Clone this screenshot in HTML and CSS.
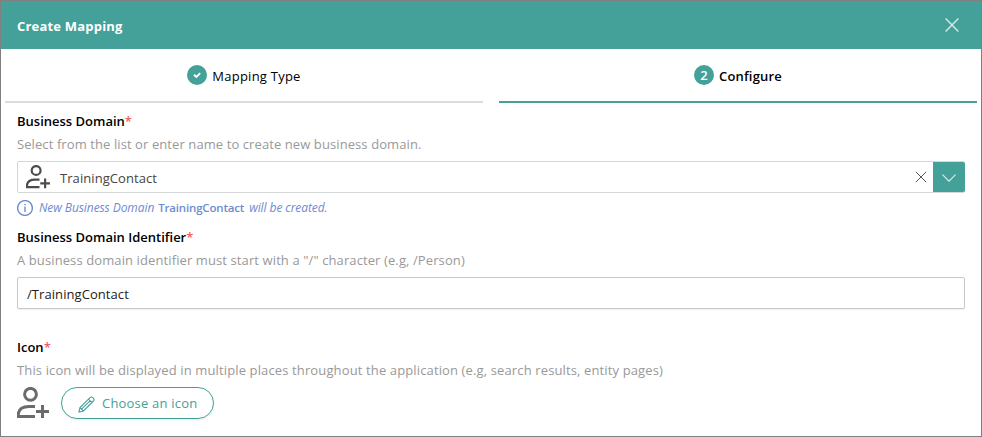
FILE: index.html
```html
<!DOCTYPE html>
<html lang="en">
<head>
<meta charset="utf-8">
<title>Create Mapping</title>
<link rel="stylesheet" href="styles.css">
</head>
<body>
<svg class="defs" width="0" height="0" aria-hidden="true">
  <symbol id="user-plus" viewBox="0 0 32 32">
    <circle cx="13.5" cy="7.3" r="5.9"/>
    <path d="M18 29.4H1.3V27C1.8 22 6 19.4 12 19.4H18M25.5 18V31M19 24.5H32"/>
  </symbol>
</svg>
<main class="dialog">
  <header class="header">
    <h1 class="title">Create Mapping</h1>
    <svg class="close" width="14" height="14" viewBox="0 0 14 14"><path d="M.6.6 13.4 13.4M13.4.6.6 13.4"/></svg>
  </header>
  <nav class="steps">
    <div class="step">
      <span class="badge"><svg width="20" height="20" viewBox="0 0 20 20"><path d="M7 9.8 9.4 12 13.2 8.2"/></svg></span>
      <span class="step-name">Mapping Type</span>
    </div>
    <div class="step active">
      <span class="badge">2</span>
      <span class="step-name">Configure</span>
    </div>
  </nav>
  <section class="field domain">
    <h2 class="label">Business Domain<b class="req">*</b></h2>
    <p class="hint domain-hint">Select from the list or enter name to create new business domain.</p>
    <div class="combo">
      <svg class="person" width="24" height="24"><use href="#user-plus"/></svg>
      <span class="combo-text">TrainingContact</span>
      <svg class="clear" width="12" height="12" viewBox="0 0 12 12"><path d="M.8.8 11.2 11.2M11.2.8.8 11.2"/></svg>
      <span class="drop"><svg width="14" height="8" viewBox="0 0 14 8"><path d="M.5.7 7 7.2 13.5.7"/></svg></span>
    </div>
    <p class="note">
      <svg width="16" height="16" viewBox="0 0 16 16"><circle cx="8" cy="8" r="7.4"/><path d="M8 6.6V12M8 4V5.3"/></svg>
      <em>New Business Domain</em><strong>TrainingContact</strong><em>will be created.</em>
    </p>
  </section>
  <section class="field ident">
    <h2 class="label">Business Domain Identifier<b class="req">*</b></h2>
    <p class="hint ident-hint">A business domain identifier must start with a "/" character (e.g, /Person)</p>
    <div class="input">/TrainingContact</div>
  </section>
  <section class="field icon">
    <h2 class="label">Icon<b class="req">*</b></h2>
    <p class="hint icon-hint">This icon will be displayed in multiple places throughout the application (e.g, search results, entity pages)</p>
    <div class="picker">
      <svg class="person large" width="32" height="32"><use href="#user-plus"/></svg>
      <span class="button">
        <svg width="17" height="17" viewBox="0 0 17 17"><path d="M.8 16.2 2 11.6 12 1.6Q13.4.3 14.8 1.7L15.3 2.2Q16.7 3.6 15.4 5L5.4 15 .8 16.2M2 11.6 5.4 15M10.5 3.1 13.9 6.5M3.8 12.8 12 4.8"/></svg>
        <span class="choose">Choose an icon</span>
      </span>
    </div>
  </section>
</main>
</body>
</html>
```
FILE: styles.css
```css
* { box-sizing: border-box; margin: 0; padding: 0; }
body { font: 13px/20px "Open Sans", "Noto Sans", sans-serif; color: #111; background: #fff; }
svg { display: block; fill: none; flex: none; }
.defs { position: absolute; }
.dialog { height: 437px; border: 1px solid #808080; overflow: hidden; white-space: nowrap; }
.header { height: 48px; background: #43a199; display: flex; align-items: center; justify-content: space-between; padding: 2px 22px 0 16px; }
.title { font-size: 13px; font-weight: 700; letter-spacing: .2px; color: #fff; }
.close { stroke: #d5ebe8; stroke-width: 1.4; margin-top: -3px; }
.steps { display: grid; grid-template-columns: 478px 478px; gap: 16px; padding-left: 4px; }
.step { height: 54px; border-bottom: 2px solid #dcdcdc; display: flex; justify-content: center; gap: 5px; padding-top: 16px; }
.step.active { border-color: #43a199; }
.step-name { padding-top: 1px; color: #000; letter-spacing: .24px; }
.active .step-name { font-weight: 600; letter-spacing: .2px; }
.badge { width: 20px; height: 20px; border-radius: 50%; background: #43a199; color: #fff; font-weight: 600; text-align: center; line-height: 21px; }
.badge svg { stroke: #fff; stroke-width: 1.9; }
.field { padding: 0 16px; }
.domain { padding-top: 8px; }
.label { font-size: 13px; font-weight: 600; color: #000; height: 20px; }
.req { color: #f0625f; font-weight: 600; }
.hint { color: #999; margin-top: 3px; height: 20px; }
.domain-hint { letter-spacing: .09px; }
.ident-hint { letter-spacing: .105px; }
.icon-hint { letter-spacing: .13px; }
.combo { height: 32px; margin-top: 7px; border: 1px solid #d5d6d7; border-radius: 2px; display: flex; align-items: center; padding-left: 8px; }
.person { stroke: #4c4c4f; stroke-width: 2.9; }
.combo-text { margin-left: 10px; color: #444; flex: 1; padding-top: 1px; letter-spacing: .07px; }
.clear { stroke: #555; stroke-width: 1; margin-right: 6px; }
.drop { width: 32px; height: 30px; margin-right: -1px; background: #43a199; border-radius: 0 2px 2px 0; display: grid; place-items: center; padding-top: 2px; }
.drop svg { stroke: #d5ebe8; stroke-width: 1.2; }
.note { display: flex; align-items: center; height: 20px; margin-top: 5px; font-size: 12px; color: #6f8bd0; }
.note svg { stroke: #6f8bd0; stroke-width: 1.4; margin-right: 6px; }
.note em { letter-spacing: -.08px; }
.note strong { font-size: 11.5px; font-weight: 600; letter-spacing: -.18px; margin: 0 5px 0 4px; }
.ident { padding-top: 9px; }
.input { height: 32px; margin-top: 7px; border: 1px solid #c8c8c8; border-radius: 2px; padding: 6px 9px; color: #222; letter-spacing: .07px; box-shadow: 0 1px 1px #00000010; }
.icon { padding-top: 28px; }
.picker { display: flex; gap: 12px; margin-top: 7px; }
.person.large { stroke: #6b6b6e; stroke-width: 3; }
.button { width: 153px; height: 32px; border: 1px solid #43a199; border-radius: 16px; display: flex; align-items: center; gap: 7px; padding-left: 16px; color: #43a199; box-shadow: 0 1px 2px #00000018; }
.button svg { stroke: #43a199; stroke-width: 1.1; margin-top: 2px; }
.choose { letter-spacing: .2px; }
```
